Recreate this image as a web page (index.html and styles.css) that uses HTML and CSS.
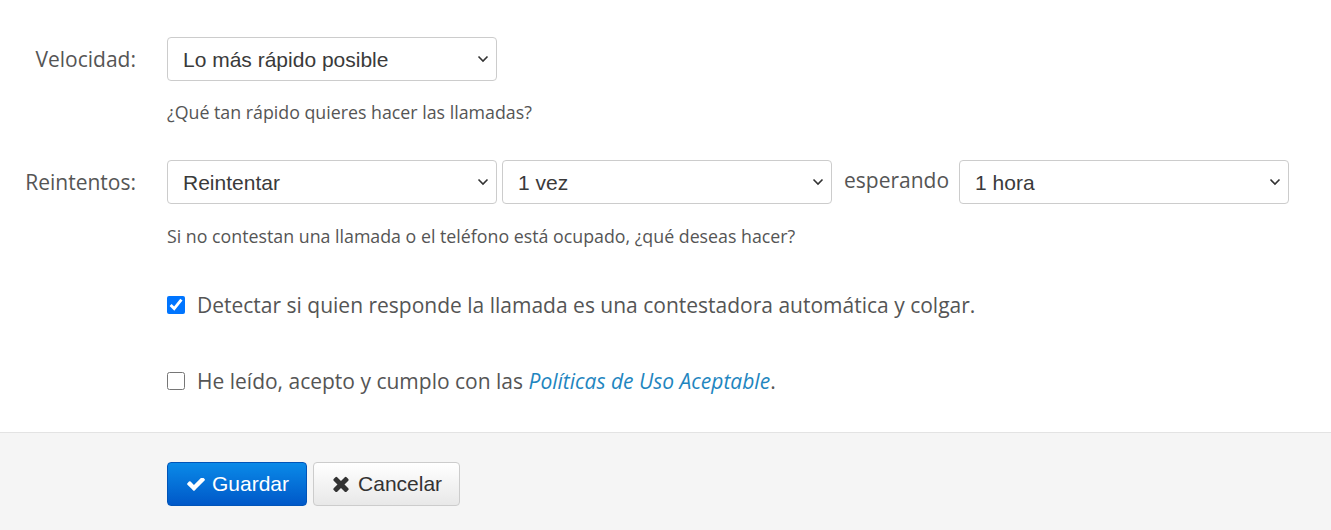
FILE: index.html
```html
<!DOCTYPE html>
<html lang="es">

<head>
  <meta charset="UTF-8">
  <title>Configuración de llamadas</title>
  <link rel="stylesheet" href="styles.css">
</head>

<body>
  <form class="settings">
    <div class="fields">
      <div class="row">
        <label class="label" for="speed">Velocidad:</label>
        <select id="speed" class="select">
          <option>Lo más rápido posible</option>
        </select>
      </div>
      <p class="help help-speed">¿Qué tan rápido quieres hacer las llamadas?</p>

      <div class="row row-retry">
        <label class="label" for="retry">Reintentos:</label>
        <select id="retry" class="select">
          <option>Reintentar</option>
        </select>
        <select class="select select-times">
          <option>1 vez</option>
        </select>
        <span class="inline-text">esperando</span>
        <select class="select">
          <option>1 hora</option>
        </select>
      </div>
      <p class="help help-retry">Si no contestan una llamada o el teléfono está ocupado, ¿qué deseas hacer?</p>

      <label class="check check-machine">
        <input type="checkbox" checked>
        <span>Detectar si quien responde la llamada es una contestadora automática y colgar.</span>
      </label>

      <label class="check check-terms">
        <input type="checkbox">
        <span>He leído, acepto y cumplo con las <a href="#">Políticas de Uso Aceptable</a>.</span>
      </label>
    </div>

    <!-- botones -->
    <div class="actions">
      <button type="button" class="btn btn-primary">
        <svg class="icon icon-check" viewBox="110 420 1570 1115"><path d="M1671 566q0 40-28 68l-724 724-136 136q-28 28-68 28t-68-28l-136-136-362-362q-28-28-28-68t28-68l136-136q28-28 68-28t68 28l294 295 656-657q28-28 68-28t68 28l136 136q28 28 28 68z"/></svg>Guardar
      </button>
      <button type="button" class="btn btn-default">
        <svg class="icon icon-times" viewBox="105 300 1200 1240"><path d="M1298 1322q0 40-28 68l-136 136q-28 28-68 28t-68-28l-294-294-294 294q-28 28-68 28t-68-28l-136-136q-28-28-28-68t28-68l294-294-294-294q-28-28-28-68t28-68l136-136q28-28 68-28t68 28l294 294 294-294q28-28 68-28t68 28l136 136q28 28 28 68t-28 68l-294 294 294 294q28 28 28 68z"/></svg>Cancelar
      </button>
    </div>
  </form>
</body>

</html>
```

FILE: styles.css
```css
body {
  margin: 0;
  padding: 0;
  background: #fff;
  font-family: "Open Sans", "Liberation Sans", sans-serif;
  color: #555;
}

.fields {
  padding-top: 37px;
}

.row {
  display: flex;
  align-items: center;
}

.label {
  width: 136px;
  margin-right: 31px;
  text-align: right;
  font-size: 21px;
  color: #555;
}

.select {
  width: 330px;
  height: 44px;
  margin: 0;
  padding: 0 40px 0 15px;
  border: 1px solid #ccc;
  border-radius: 4px;
  background: #fff url("data:image/svg+xml,%3Csvg xmlns='http://www.w3.org/2000/svg' width='12' height='8' viewBox='0 0 12 8'%3E%3Cpath d='M1.5 1.5 6 6l4.5-4.5' fill='none' stroke='%23333' stroke-width='1.6'/%3E%3C/svg%3E") no-repeat right 7px center;
  appearance: none;
  -webkit-appearance: none;
  font-family: "Liberation Sans", Arial, sans-serif;
  font-size: 21px;
  color: #3a3a3a;
}

.select-times {
  margin-left: 5px;
}

.inline-text {
  margin: 0 10px 4px 12px;
  font-size: 21px;
  color: #555;
}

.help {
  margin: 0 0 0 167px;
  font-size: 17.8px;
  line-height: 24px;
  color: #555;
}

.help-speed {
  margin-top: 19px;
  margin-bottom: 36px;
}

.help-retry {
  margin-top: 20px;
}

.check {
  display: flex;
  align-items: center;
  margin-left: 167px;
  font-size: 21px;
  line-height: 28px;
  color: #555;
}

.check input {
  width: 18px;
  height: 18px;
  margin: 0 12px 0 0;
}

.check-machine {
  margin-top: 43px;
}

.check-terms {
  margin-top: 48px;
}

.check a {
  color: #1f86c0;
  font-style: italic;
  text-decoration: none;
}

.actions {
  margin-top: 37px;
  padding: 29px 0 25px 167px;
  display: flex;
  gap: 6px;
  background: #f5f5f5;
  border-top: 1px solid #e3e3e3;
}

.btn {
  display: flex;
  align-items: center;
  height: 44px;
  border-radius: 4px;
  font-family: "Liberation Sans", Arial, sans-serif;
  font-size: 21px;
  cursor: pointer;
}

.btn .icon {
  fill: currentColor;
}

.icon-check {
  width: 18px;
  height: 13px;
  margin-right: 7px;
}

.icon-times {
  width: 16px;
  height: 16px;
  margin-right: 9px;
}

.btn-primary {
  padding: 0 17px 0 19px;
  color: #fff;
  border: 1px solid #0054b8;
  background: linear-gradient(#0a8ae8, #0058c8);
}

.btn-default {
  padding: 0 17px 0 19px;
  color: #333;
  border: 1px solid #ccc;
  background: linear-gradient(#fff, #e8e8e8);
}
```
